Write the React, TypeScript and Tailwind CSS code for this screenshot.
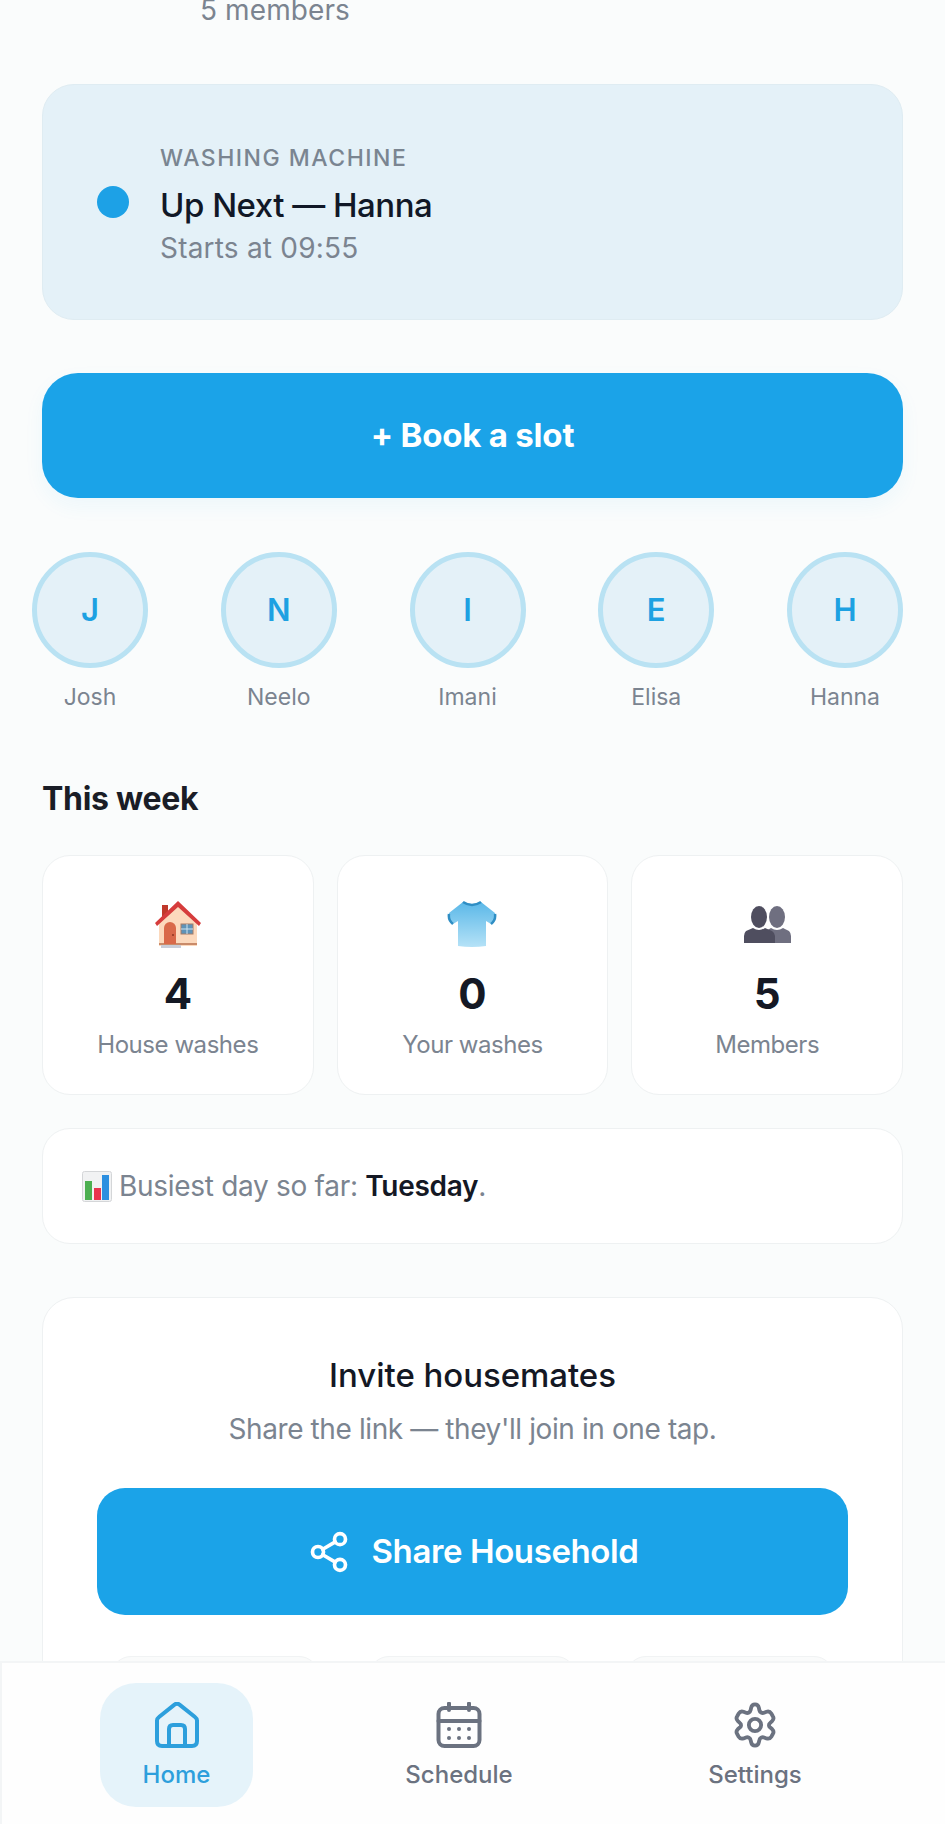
import { Share2 } from 'lucide-react';

const members = ['Josh', 'Neelo', 'Imani', 'Elisa', 'Hanna'];

function HouseEmoji() {
  return (
    <svg width="50" height="50" viewBox="0 0 50 50">
      <rect x="9" y="6" width="6" height="12" fill="#c0392b" />
      <path d="M6 24 L25 6 L44 24 L44 47 L6 47 Z" fill="#fcd9bd" />
      <path d="M2 24 L25 2 L48 24 L46 27 L25 8 L4 27 Z" fill="#d63c3c" />
      <rect x="6" y="44" width="38" height="2" fill="#c98b6a" />
      <path d="M11 45 V29 a6 6 0 0 1 12 0 V45 Z" fill="#d9694a" />
      <circle cx="20" cy="36" r="1" fill="#8d3420" />
      <rect x="28" y="25" width="12" height="10" fill="#5f93b8" stroke="#a57d68" strokeWidth="1" />
      <path d="M34 25 V35 M28 30 H40" stroke="#cfe2ee" strokeWidth="1" />
      <rect x="8" y="46" width="20" height="3" fill="#c9cdd8" />
    </svg>
  );
}

function ShirtEmoji() {
  return (
    <svg width="50" height="50" viewBox="0 0 50 50">
      <defs>
        <linearGradient id="shirt" x1="0" y1="0" x2="0" y2="1">
          <stop offset="0" stopColor="#5bb8e8" />
          <stop offset="1" stopColor="#b5e2f7" />
        </linearGradient>
      </defs>
      <path d="M16 3 Q25 7 34 3 L48 14 Q49 21 44 25 L39 22 L39 47 Q25 49 11 47 L11 22 L6 25 Q1 21 2 14 Z" fill="url(#shirt)" />
      <path d="M16 3 Q25 9 34 3" stroke="#2f8ec4" strokeWidth="2.5" fill="none" />
      <path d="M2 15 Q1 21 6 25 M48 15 Q49 21 44 25" stroke="#2f8ec4" strokeWidth="2.5" fill="none" />
    </svg>
  );
}

function PeopleEmoji() {
  return (
    <svg width="50" height="50" viewBox="0 0 50 50">
      <g fill="#6f6f80">
        <ellipse cx="35" cy="18" rx="8" ry="11" />
        <path d="M29 29 Q35 33 41 29 L47 32 Q49 34 49 37 L49 44 L22 44 L22 33 Z" />
      </g>
      <g fill="#4f4e5f">
        <ellipse cx="17" cy="18" rx="8" ry="11" />
        <path d="M11 29 Q17 33 23 29 L30 32 Q33 34 33 37 L33 44 L2 44 L2 37 Q2 34 4 32 Z" />
      </g>
    </svg>
  );
}

function ChartEmoji() {
  return (
    <svg width="30" height="31" viewBox="0 0 30 31" className="inline-block">
      <rect x="0.5" y="0.5" width="29" height="30" rx="2" fill="#f1f2f3" stroke="#d4d6d8" />
      <rect x="3" y="10" width="7" height="19" fill="#4caf50" />
      <rect x="12" y="17" width="7" height="12" fill="#e8344e" />
      <rect x="20" y="4" width="7" height="25" fill="#2c8fe0" />
    </svg>
  );
}

function HomeIcon() {
  return (
    <svg width="46" height="46" viewBox="0 0 46 46" fill="none" stroke="#2d9fdc" strokeWidth="4" strokeLinejoin="round" strokeLinecap="round">
      <path d="M3 18.5 Q3 16.5 5 15 L20.5 2.6 Q23 1 25.5 2.6 L41 15 Q43 16.5 43 18.5 V39 Q43 44 38 44 H8 Q3 44 3 39 Z" />
      <path d="M15 44 V27 Q15 23 19 23 H27 Q31 23 31 27 V44" />
    </svg>
  );
}

function CalendarIcon() {
  return (
    <svg width="46" height="46" viewBox="0 0 46 46" fill="none" stroke="#6b7280" strokeWidth="4" strokeLinecap="round">
      <rect x="2.5" y="6" width="41" height="38" rx="6" />
      <path d="M2.5 19 H43.5 M13 1.5 V8 M33 1.5 V8" />
      <g fill="#6b7280" stroke="none">
        <circle cx="13" cy="27" r="2" /><circle cx="23" cy="27" r="2" /><circle cx="33" cy="27" r="2" />
        <circle cx="13" cy="36" r="2" /><circle cx="23" cy="36" r="2" /><circle cx="33" cy="36" r="2" />
      </g>
    </svg>
  );
}

function GearIcon() {
  return (
    <svg width="46" height="46" viewBox="0 0 24 24" fill="none" stroke="#6b7280" strokeWidth="2" strokeLinejoin="round">
      <path d="M12 1.2 C13 1.2 13.8 1.9 14 2.9 L14.3 4.3 C14.5 5.3 15.7 6 16.7 5.6 L18 5.1 C19 4.8 20 5.2 20.5 6 L21.3 7.4 C21.8 8.2 21.6 9.3 20.9 10 L19.8 11 C19.1 11.6 19.1 12.6 19.8 13.2 L20.9 14.1 C21.6 14.8 21.8 15.9 21.3 16.7 L20.5 18.1 C20 18.9 19 19.3 18 19 L16.7 18.5 C15.7 18.1 14.5 18.8 14.3 19.8 L14 21.1 C13.8 22.1 13 22.8 12 22.8 C11 22.8 10.2 22.1 10 21.1 L9.7 19.8 C9.5 18.8 8.3 18.1 7.3 18.5 L6 19 C5 19.3 4 18.9 3.5 18.1 L2.7 16.7 C2.2 15.9 2.4 14.8 3.1 14.1 L4.2 13.2 C4.9 12.6 4.9 11.6 4.2 11 L3.1 10 C2.4 9.3 2.2 8.2 2.7 7.4 L3.5 6 C4 5.2 5 4.8 6 5.1 L7.3 5.6 C8.3 6 9.5 5.3 9.7 4.3 L10 2.9 C10.2 1.9 11 1.2 12 1.2 Z" />
      <circle cx="12" cy="12" r="3.2" />
    </svg>
  );
}

export default function App() {
  return (
    <div className="relative h-[1824px] w-[945px] overflow-hidden bg-[#fafcfc] font-['Inter','Liberation_Sans',sans-serif]">
      {/* top of the page is scrolled away */}
      <p className="-mt-[6px] pl-[200px] text-[28px] leading-[32px] tracking-[0.1px] text-[#7b8490]">5 members</p>

      <div className="px-[42px]">
        <div className="mt-[58px] flex h-[236px] items-center gap-[31px] rounded-[32px] border border-[#dfecf2] bg-[#e4f1f8] pl-[54px]">
          <div className="h-[32px] w-[32px] rounded-full bg-[#1da1e6]" />
          <div className="pt-[4px]">
            <p className="text-[23px] font-medium leading-[30px] tracking-[1.5px] text-[#7a8591]">WASHING MACHINE</p>
            <p className="mt-[11px] text-[33px] font-medium leading-[42px] tracking-[-0.5px] text-[#111827]">Up Next — Hanna</p>
            <p className="mt-[5px] text-[28px] leading-[34px] tracking-[0.2px] text-[#7b8490]">Starts at 09:55</p>
          </div>
        </div>

        <button className="mt-[53px] flex h-[125px] w-full items-center justify-center rounded-[36px] bg-[#1ba3e8] text-[33px] font-bold tracking-[-0.2px] text-white shadow-[0_8px_20px_rgba(27,163,232,0.06)]">
          + Book a slot
        </button>
      </div>

      <div className="mt-[54px] flex justify-between pl-[32px] pr-[42px]">
        {members.map(name => (
          <div key={name} className="flex w-[116px] flex-col items-center">
            <div className="flex h-[116px] w-[116px] items-center justify-center rounded-full border-[5px] border-[#b9e2f3] bg-[#e4f1f8] text-[31px] font-semibold text-[#1da1e2]">
              {name[0]}
            </div>
            <p className="mt-[13px] text-[23px] leading-[32px] tracking-[0px] text-[#7b8490]">{name}</p>
          </div>
        ))}
      </div>

      <div className="px-[42px]">
        <h2 className="mt-[65px] text-[32px] font-bold leading-[42px] tracking-[-0.3px] text-[#1a1d26]">This week</h2>

        <div className="mt-[35px] grid grid-cols-3 gap-[23px]">
          {[
            { icon: <HouseEmoji />, value: '4', label: 'House washes' },
            { icon: <ShirtEmoji />, value: '0', label: 'Your washes' },
            { icon: <PeopleEmoji />, value: '5', label: 'Members' },
          ].map(stat => (
            <div key={stat.label} className="flex h-[240px] flex-col items-center rounded-[28px] border border-[#eef1f2] bg-white pt-[43px]">
              {stat.icon}
              <p className="mt-[18px] text-[42px] font-bold leading-[54px] text-[#141824]">{stat.value}</p>
              <p className="mt-[8px] text-[24px] leading-[32px] tracking-[-0.45px] text-[#7b8490]">{stat.label}</p>
            </div>
          ))}
        </div>

        <div className="mt-[33px] flex h-[116px] items-center gap-[7px] rounded-[28px] border border-[#eef1f2] bg-white pl-[39px] text-[28px] tracking-[-0.3px] text-[#7b8490]">
          <ChartEmoji />
          <p>Busiest day so far: <span className="font-semibold text-[#141824]">Tuesday</span>.</p>
        </div>

        <div className="mt-[53px] h-[500px] rounded-[32px] border border-[#eef1f2] bg-white px-[54px] pt-[56px]">
          <h3 className="text-center text-[33px] font-medium leading-[42px] tracking-[-0.05px] text-[#141824]">Invite housemates</h3>
          <p className="mt-[15px] text-center text-[28px] leading-[36px] tracking-[-0.4px] text-[#7b8490]">Share the link — they'll join in one tap.</p>
          <button className="mt-[41px] flex h-[127px] w-full items-center justify-center gap-[21px] rounded-[28px] bg-[#1ba3e8] text-[33px] font-semibold tracking-[-0.4px] text-white">
            <Share2 size={44} strokeWidth={2} />
            Share Household
          </button>
          <div className="mt-[41px] grid grid-cols-3 gap-[50px] px-[14px]">
            <div className="h-[60px] rounded-[20px] border border-[#f1f3f4] bg-[#fafbfb]" />
            <div className="h-[60px] rounded-[20px] border border-[#f1f3f4] bg-[#fafbfb]" />
            <div className="h-[60px] rounded-[20px] border border-[#f1f3f4] bg-[#fafbfb]" />
          </div>
        </div>
      </div>

      {/* bottom tab bar */}
      <nav className="absolute bottom-0 left-0 right-0 h-[163px] border-t-2 border-l-2 border-[#f3f5f6] bg-[#fefefe]">
        <div className="absolute left-[98px] top-[20px] flex h-[124px] w-[153px] flex-col items-center rounded-[36px] bg-[#e5f3fa] pt-[19px]">
          <HomeIcon />
          <span className="mt-[11px] text-[24px] font-medium leading-[32px] tracking-[0px] text-[#2d9fdc]">Home</span>
        </div>
        <div className="absolute left-[397px] top-[39px] flex w-[120px] flex-col items-center">
          <CalendarIcon />
          <span className="mt-[11px] text-[24px] font-medium leading-[32px] tracking-[0px] text-[#6b7280]">Schedule</span>
        </div>
        <div className="absolute left-[693px] top-[39px] flex w-[120px] flex-col items-center">
          <GearIcon />
          <span className="mt-[11px] text-[24px] font-medium leading-[32px] tracking-[0px] text-[#6b7280]">Settings</span>
        </div>
      </nav>
    </div>
  );
}
